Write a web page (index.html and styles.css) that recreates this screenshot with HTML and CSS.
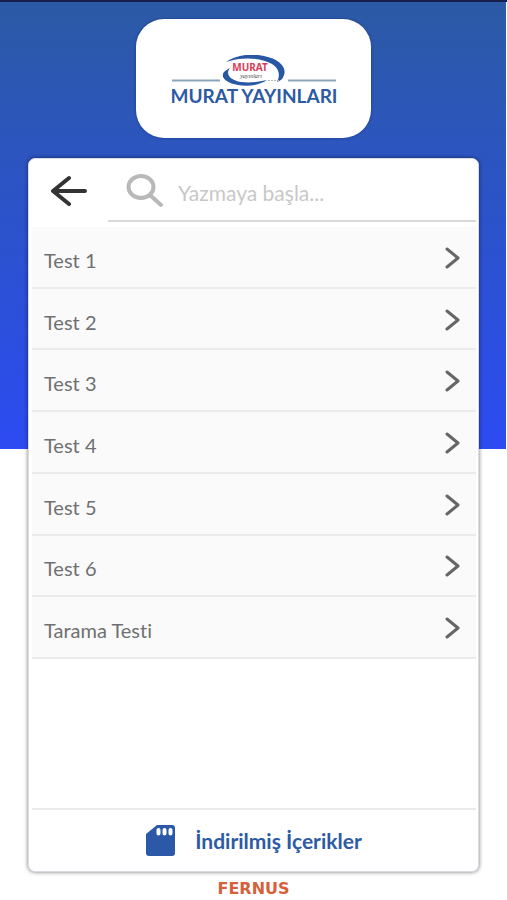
FILE: index.html
```html
<!DOCTYPE html>
<html lang="tr">
<head>
<meta charset="utf-8">
<meta name="viewport" content="width=device-width, initial-scale=1">
<title>Murat Yayınları</title>
<link rel="stylesheet" href="styles.css">
</head>
<body>
<div class="page">
  <header class="brand">
    <svg class="brand-logo" viewBox="-1 1 168 56" role="img" aria-label="Murat Yayınları">
      <path class="rule" d="M1 26.500H49M117 26.500H165"/>
      <path class="swoosh" d="M55 8C64 1 80-1 93 2C108 5 116 13 113 21C112 25 109 27 106 28C109 22 109 15 101 10C91 4 72 2 55 8Z"/>
      <path class="swoosh" d="M59 14C54 20 59 26 70 28C79 29 88 28 96 26C89 31 77 33 67 31C55 29 49 23 53 18C55 16 57 15 59 14Z"/>
      <text class="logo-red" x="79" y="17" text-anchor="middle">MURAT</text>
      <text class="logo-script" x="80" y="24" text-anchor="middle">yayınları</text>
      <path class="tiny" d="M97 26.500H108"/>
      <text class="logo-name" x="83" y="49" text-anchor="middle">MURAT YAYINLARI</text>
    </svg>
  </header>

  <main class="panel">
    <div class="toolbar">
      <button class="back" type="button" aria-label="Geri">
        <svg width="36" height="32" viewBox="0 0 36 32"><path d="M34 16H2M18 3L2 16L18 29"/></svg>
      </button>
      <label class="search">
        <svg width="38" height="34" viewBox="0 0 38 34"><ellipse cx="15" cy="13" rx="12.500" ry="11"/><path d="M25 22L35 31"/></svg>
        <input type="search" placeholder="Yazmaya başla..." aria-label="Ara">
      </label>
    </div>
    <nav class="tests">
      <a href="#">Test 1<svg viewBox="0 0 16 22"><path d="M2 2L13 11L2 20"/></svg></a>
      <a href="#">Test 2<svg viewBox="0 0 16 22"><path d="M2 2L13 11L2 20"/></svg></a>
      <a href="#">Test 3<svg viewBox="0 0 16 22"><path d="M2 2L13 11L2 20"/></svg></a>
      <a href="#">Test 4<svg viewBox="0 0 16 22"><path d="M2 2L13 11L2 20"/></svg></a>
      <a href="#">Test 5<svg viewBox="0 0 16 22"><path d="M2 2L13 11L2 20"/></svg></a>
      <a href="#">Test 6<svg viewBox="0 0 16 22"><path d="M2 2L13 11L2 20"/></svg></a>
      <a href="#">Tarama Testi<svg viewBox="0 0 16 22"><path d="M2 2L13 11L2 20"/></svg></a>
    </nav>
    <button class="downloads" type="button">
      <svg width="30" height="32" viewBox="0 0 30 32"><path class="card" d="M11 0H26Q29 0 29 3V28Q29 31 26 31H3Q0 31 0 28V9Z"/><path class="pins" d="M12.500 5V8.500M18.500 5V8.500M24.500 5V8.500"/></svg>
      <span>İndirilmiş İçerikler</span>
    </button>
  </main>
  <footer class="maker">FERNUS</footer>
</div>
</body>
</html>
```
FILE: styles.css
```css
* {
  box-sizing: border-box;
}

body {
  margin: 0;
  background: #fff;
  font-family: Lato, "Liberation Sans", sans-serif;
  font-variant-ligatures: none;
}

.page {
  min-height: 100vh;
  display: flex;
  flex-direction: column;
  align-items: center;
  padding: 17px 28px 0;
  border-top: 2px solid #17204f;
  background: linear-gradient(#2c5aa5, #2d4bf2) no-repeat 0 0 / calc(100% - 1px) calc(50% - 2px);
}

.brand {
  width: 235px;
  height: 119px;
  display: flex;
  justify-content: center;
  align-items: center;
  background: #fff;
  border-radius: 28px;
  box-shadow: 0 0 3px #16306fb0;
}

.brand-logo {
  width: 168px;
  height: 56px;
  margin-top: 8px;
}

.rule {
  stroke: #8aa5b8;
  stroke-width: 2;
}

.swoosh {
  fill: #2858a4;
}

.tiny {
  stroke: #b5b5b5;
  stroke-width: 1;
  stroke-dasharray: 2 1;
}

.logo-red {
  font: 700 10px "Noto Sans", sans-serif;
  fill: #d93c58;
}

.logo-script {
  font: italic 6px "Liberation Serif", serif;
  fill: #444;
}

.logo-name {
  font: 700 19px Lato, sans-serif;
  fill: #2c5aa3;
}

.panel {
  width: 100%;
  flex: 1;
  display: flex;
  flex-direction: column;
  margin-top: 20px;
  padding: 0 2px 0 3px;
  background: #fff;
  border: 1px solid #d9dce2;
  border-radius: 7px;
  box-shadow: 0 0 4px #0008;
}

.toolbar {
  height: 68px;
  display: flex;
  padding-bottom: 5px;
}

.back {
  width: 76px;
  padding: 0;
  border: 0;
  background: none;
}

.back svg,
.search svg {
  display: block;
  fill: none;
  stroke-linecap: round;
  stroke-linejoin: round;
}

.back svg {
  margin-left: 19px;
  stroke: #333;
  stroke-width: 4;
}

.search {
  flex: 1;
  min-width: 0;
  display: flex;
  align-items: center;
  gap: 14px;
  padding: 2px 0 0 18px;
  border-bottom: 2px solid #d9d9d9;
}

.search svg {
  flex: none;
  stroke: #b8b8b8;
  stroke-width: 4;
}

.search input {
  flex: 1;
  min-width: 0;
  padding: 4px 0 0;
  border: 0;
  outline: 0;
  background: none;
  font: 21px/28px Lato, sans-serif;
  color: #666;
}

.search input::placeholder {
  color: #c8c8c8;
}

.tests {
  min-height: 432px;
  display: grid;
  grid-auto-rows: 1fr;
}

.tests a {
  display: flex;
  justify-content: space-between;
  align-items: center;
  padding: 6px 15px 0 12px;
  border-bottom: 2px solid #ebebeb;
  background: #fafafa;
  color: #707070;
  font-size: 20px;
  line-height: 28px;
  text-decoration: none;
}

.tests svg {
  width: 16px;
  height: 22px;
  margin-bottom: 4px;
  fill: none;
  stroke: #666;
  stroke-width: 3;
  stroke-linecap: round;
  stroke-linejoin: round;
}

.downloads {
  height: 63px;
  display: flex;
  justify-content: center;
  align-items: center;
  gap: 19px;
  margin-top: auto;
  padding: 0;
  border: 0;
  border-top: 2px solid #ebebeb;
  background: none;
  color: #2d5aa5;
  font: 700 21px/28px Lato, sans-serif;
}

.card {
  fill: #2b58a7;
}

.pins {
  stroke: #fff;
  stroke-width: 4;
  stroke-linecap: round;
}

.maker {
  padding: 10px 0 4px;
  color: #d65f3c;
  font: 700 16px/14px "DejaVu Sans", sans-serif;
}
```
